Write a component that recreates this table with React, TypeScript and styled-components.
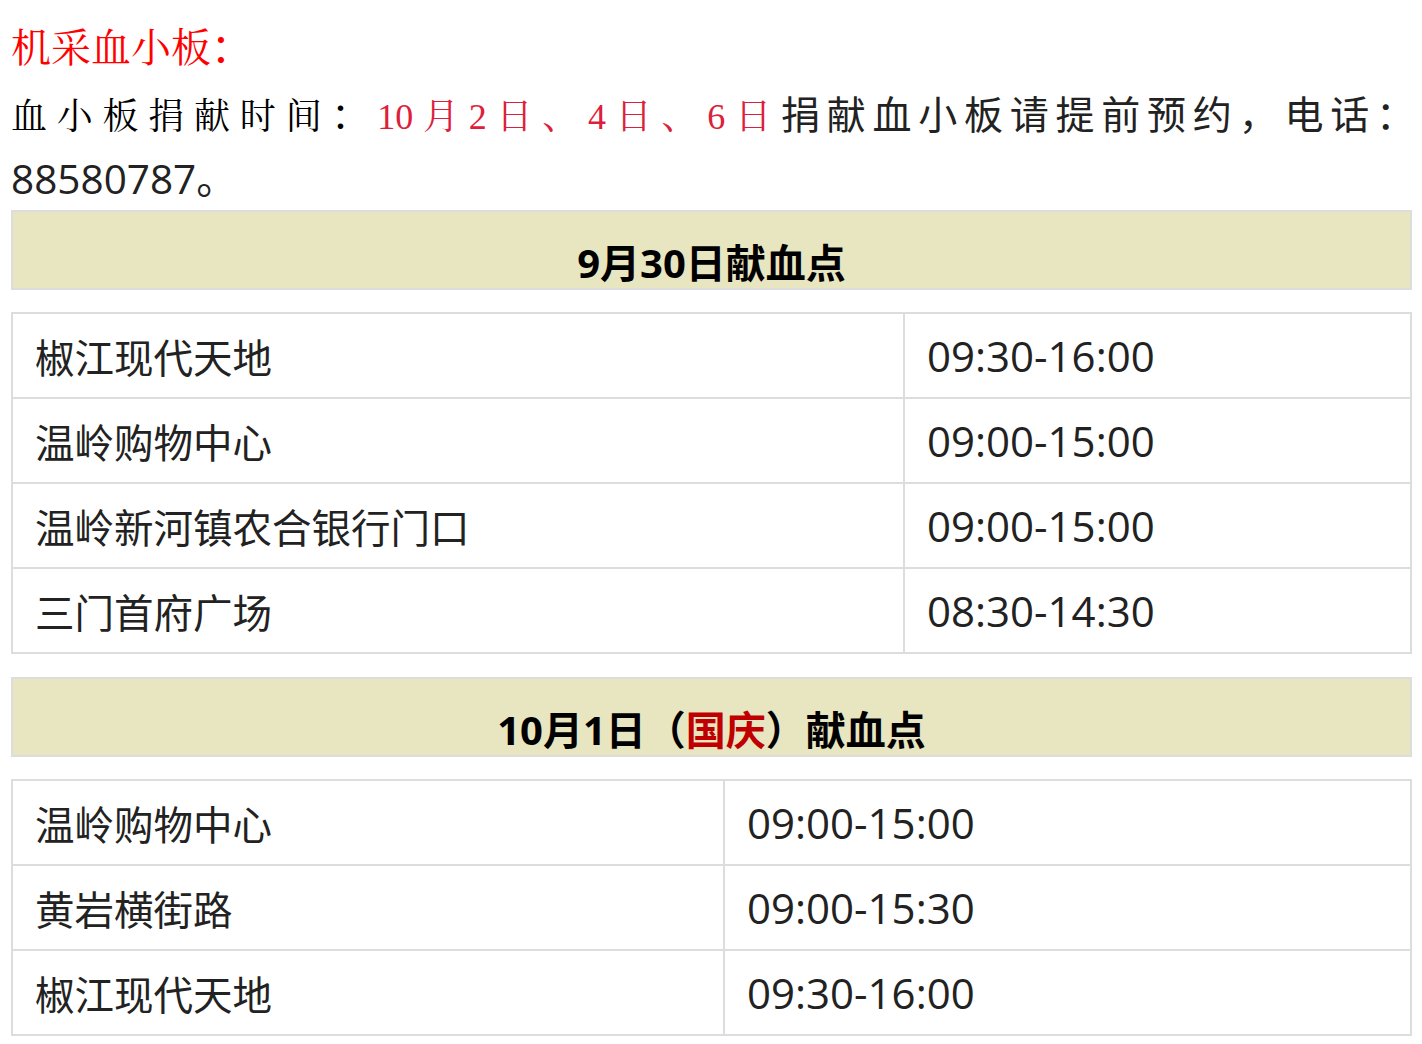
import React from 'react';
import styled, { createGlobalStyle } from 'styled-components';

const GlobalStyle = createGlobalStyle`
  html, body {
    margin: 0;
    padding: 0;
    background: #ffffff;
  }
  body {
    font-family: "Open Sans", "Noto Sans CJK SC", sans-serif;
    text-spacing-trim: space-all;
    -webkit-font-smoothing: antialiased;
  }
`;

const cjkSerif = `"Noto Serif CJK SC", "Noto Sans CJK SC", serif`;
const latinSerif = `"Liberation Serif", "Noto Serif CJK SC", "Noto Sans CJK SC", serif`;
const sans = `"Open Sans", "Noto Sans CJK SC", sans-serif`;

const Page = styled.div`
  padding: 0 10px 0 11px;
  width: 1422px;
  box-sizing: border-box;
`;

const Title = styled.p`
  margin: 0;
  padding-top: 13px;
  font-family: ${cjkSerif};
  font-size: 40px;
  line-height: 63px;
  color: #ff0000;
`;

// centred full-width colon, as in the serif original
const Colon = styled.span`
  font-family: "Noto Sans CJK TC", "Noto Sans CJK SC", sans-serif;
`;

const Notice = styled.div`
  margin-top: 7px;
  font-size: 36px;
  line-height: 63px;
`;

const JustifiedLine = styled.p`
  margin: 0;
  text-align: justify;
  text-align-last: justify;
  text-justify: inter-character;
`;

const PlainLine = styled.p`
  margin: 0;
  font-family: ${sans};
  font-size: 40.5px;
  color: #222222;
`;

const Seg = styled.span<{ $tone: 'black' | 'crimson' | 'dark' }>`
  font-family: ${(p) => (p.$tone === 'crimson' ? latinSerif : p.$tone === 'black' ? cjkSerif : sans)};
  font-size: ${(p) => (p.$tone === 'dark' ? 39 : 36)}px;
  letter-spacing: ${(p) => (p.$tone === 'dark' ? -3 : 0)}px;
  line-height: 1;
  color: ${(p) => (p.$tone === 'crimson' ? '#dc1f3c' : p.$tone === 'black' ? '#000000' : '#222222')};
`;

const Heading = styled.div`
  box-sizing: border-box;
  height: 80px;
  padding: 31px 0 5px;
  border: 2px solid #dddddd;
  background: #e8e5c1;
  text-align: center;
  font-family: ${sans};
  font-weight: 700;
  font-size: 40px;
  line-height: 40px;
  color: #000000;
`;

const Holiday = styled.span`
  color: #c00000;
`;

const Table = styled.div`
  margin: 22px 0 23px;
  border-top: 2px solid #dddddd;
  border-left: 2px solid #dddddd;
`;

const Row = styled.div<{ $split: number }>`
  display: grid;
  grid-template-columns: ${(p) => p.$split}px 1fr;
`;

const Cell = styled.div<{ $time?: boolean }>`
  box-sizing: border-box;
  height: 85px;
  display: flex;
  align-items: center;
  padding: 0 0 0 22px;
  border-right: 2px solid #dddddd;
  border-bottom: 2px solid #dddddd;
  font-family: ${sans};
  font-size: ${(p) => (p.$time ? 42 : 39.5)}px;
  color: #222222;
`;

type Spot = { place: string; time: string };

const day1: Spot[] = [
  { place: '椒江现代天地', time: '09:30-16:00' },
  { place: '温岭购物中心', time: '09:00-15:00' },
  { place: '温岭新河镇农合银行门口', time: '09:00-15:00' },
  { place: '三门首府广场', time: '08:30-14:30' },
];

const day2: Spot[] = [
  { place: '温岭购物中心', time: '09:00-15:00' },
  { place: '黄岩横街路', time: '09:00-15:30' },
  { place: '椒江现代天地', time: '09:30-16:00' },
];

const SpotTable = ({ spots, split }: { spots: Spot[]; split: number }) => (
  <Table>
    {spots.map((s, i) => (
      <Row key={i} $split={split}>
        <Cell>{s.place}</Cell>
        <Cell $time>{s.time}</Cell>
      </Row>
    ))}
  </Table>
);

export default function App() {
  return (
    <Page lang="zh-CN">
      <GlobalStyle />
      <Title>
        机采血小板<Colon>：</Colon>
      </Title>
      <Notice>
        <JustifiedLine>
          <Seg $tone="black">
            血小板捐献时间<Colon>：</Colon>
          </Seg>
          <Seg $tone="crimson">10月2日、4日、6日</Seg>
          <Seg $tone="dark">捐献血小板请提前预约，电话：</Seg>
        </JustifiedLine>
        <PlainLine>88580787。</PlainLine>
      </Notice>

      <Heading>9月30日献血点</Heading>
      <SpotTable spots={day1} split={892} />

      <Heading>
        10月1日（<Holiday>国庆</Holiday>）献血点
      </Heading>
      <SpotTable spots={day2} split={712} />
    </Page>
  );
}
